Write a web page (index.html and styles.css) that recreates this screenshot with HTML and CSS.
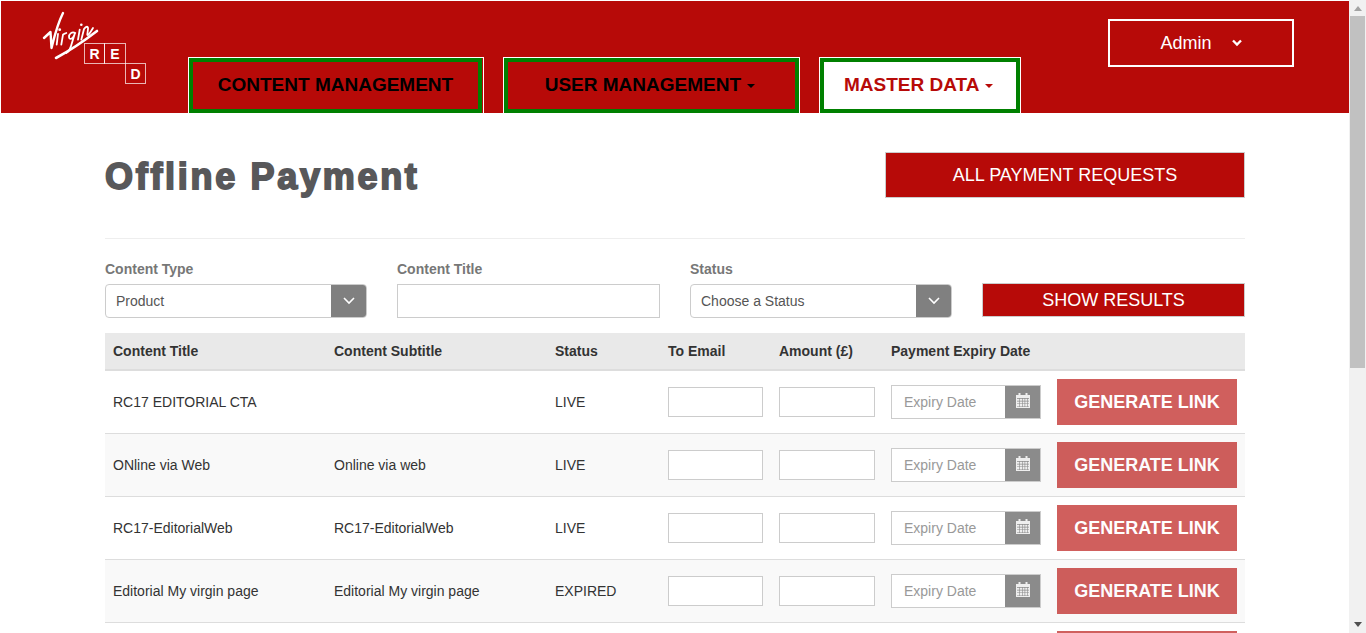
FILE: index.html
```html
<!DOCTYPE html>
<html lang="en">
<head>
    <meta charset="UTF-8">
    <meta name="viewport" content="width=device-width, initial-scale=1.0">
    <title>Offline Payment</title>
    <link rel="stylesheet" href="styles.css">
</head>
<body>

<div class="window">
<div class="page">
    <header class="topbar">
        <svg class="logo" width="110" height="84" viewBox="0 0 110 84">
            <g fill="none" stroke="#fff" stroke-linecap="round" stroke-linejoin="round">
                <path stroke-width="2.4" d="M3 33 L9.5 27 L10.5 43 C13 33 16 20 22 8"/>
                <path stroke-width="1.8" d="M17 29 L15.7 39.7 M20.3 39.7 L22 29.7 C23 28.5 24 28.5 25.3 28 M34.3 28 C31 26 28 29 28 32 C28 35 32 35 34 28 L30 41 C29 45 27 47 25.3 48 M38.7 24.7 L37 34.7 M40.3 34.7 L43 24 C45 21 47.5 21 47 24 L46.3 29.7 C47 31 49 28 52 23"/>
                <path stroke-width="2.6" d="M15 53 C28 46 43 36 56 26"/>
            </g>
            <circle cx="18.7" cy="24.7" r="1.4" fill="#fff"/>
            <circle cx="40.3" cy="19.7" r="1.3" fill="#fff"/>
            <g fill="none" stroke="#fff" stroke-opacity=".7">
                <rect x="43.5" y="38.5" width="20" height="20"/>
                <rect x="63.5" y="38.5" width="21" height="20"/>
                <rect x="84.5" y="58.5" width="20" height="20"/>
            </g>
            <g class="logo-letters">
                <text x="53.5" y="54">R</text>
                <text x="74" y="54">E</text>
                <text x="94.5" y="74">D</text>
            </g>
        </svg>
        <nav class="tabs">
            <a class="tab tab-content"><span class="tab-inner">CONTENT MANAGEMENT</span></a>
            <a class="tab tab-user"><span class="tab-inner">USER MANAGEMENT <i class="caret"></i></span></a>
            <a class="tab tab-master"><span class="tab-inner">MASTER DATA <i class="caret"></i></span></a>
        </nav>
        <div class="admin">
            <span>Admin</span>
            <svg width="10" height="8" viewBox="0 0 10 8"><path d="M1 1.5 L5 5.5 L9 1.5" fill="none" stroke="#fff" stroke-width="2.4"/></svg>
        </div>
    </header>

    <main class="content">
        <div class="title-row">
            <h1>Offline Payment</h1>
            <button class="btn-red btn-all">ALL PAYMENT REQUESTS</button>
        </div>

        <div class="filters">
            <div class="field field-type">
                <label>Content Type</label>
                <div class="select"><span>Product</span><b class="select-arrow"><svg width="12" height="8" viewBox="0 0 12 8"><path d="M1 1 L6 6 L11 1" fill="none" stroke="#fff" stroke-width="1.6"/></svg></b></div>
            </div>
            <div class="field field-title">
                <label>Content Title</label>
                <input class="text-input" type="text">
            </div>
            <div class="field field-status">
                <label>Status</label>
                <div class="select"><span>Choose a Status</span><b class="select-arrow"><svg width="12" height="8" viewBox="0 0 12 8"><path d="M1 1 L6 6 L11 1" fill="none" stroke="#fff" stroke-width="1.6"/></svg></b></div>
            </div>
            <button class="btn-red btn-show">SHOW RESULTS</button>
        </div>

        <table class="results">
            <thead>
                <tr>
                    <th class="col-title">Content Title</th>
                    <th class="col-sub">Content Subtitle</th>
                    <th class="col-status">Status</th>
                    <th class="col-email">To Email</th>
                    <th class="col-amount">Amount (£)</th>
                    <th class="col-date">Payment Expiry Date</th>
                    <th class="col-action"></th>
                </tr>
            </thead>
            <tbody>
                <tr>
                    <td>RC17 EDITORIAL CTA</td>
                    <td></td>
                    <td>LIVE</td>
                    <td><input class="cell-input" type="text"></td>
                    <td><input class="cell-input cell-amount" type="text"></td>
                    <td><div class="date"><input type="text" placeholder="Expiry Date"><b class="date-icon"><svg width="14" height="15" viewBox="0 0 14 15"><use href="#cal"/></svg></b></div></td>
                    <td><button class="btn-link">GENERATE LINK</button></td>
                </tr>
                <tr>
                    <td>ONline via Web</td>
                    <td>Online via web</td>
                    <td>LIVE</td>
                    <td><input class="cell-input" type="text"></td>
                    <td><input class="cell-input cell-amount" type="text"></td>
                    <td><div class="date"><input type="text" placeholder="Expiry Date"><b class="date-icon"><svg width="14" height="15" viewBox="0 0 14 15"><use href="#cal"/></svg></b></div></td>
                    <td><button class="btn-link">GENERATE LINK</button></td>
                </tr>
                <tr>
                    <td>RC17-EditorialWeb</td>
                    <td>RC17-EditorialWeb</td>
                    <td>LIVE</td>
                    <td><input class="cell-input" type="text"></td>
                    <td><input class="cell-input cell-amount" type="text"></td>
                    <td><div class="date"><input type="text" placeholder="Expiry Date"><b class="date-icon"><svg width="14" height="15" viewBox="0 0 14 15"><use href="#cal"/></svg></b></div></td>
                    <td><button class="btn-link">GENERATE LINK</button></td>
                </tr>
                <tr>
                    <td>Editorial My virgin page</td>
                    <td>Editorial My virgin page</td>
                    <td>EXPIRED</td>
                    <td><input class="cell-input" type="text"></td>
                    <td><input class="cell-input cell-amount" type="text"></td>
                    <td><div class="date"><input type="text" placeholder="Expiry Date"><b class="date-icon"><svg width="14" height="15" viewBox="0 0 14 15"><use href="#cal"/></svg></b></div></td>
                    <td><button class="btn-link">GENERATE LINK</button></td>
                </tr>
            </tbody>
        </table>
        <div class="next-row"></div>
    </main>
</div>

<div class="scrollbar">
    <i class="arrow-up"></i>
    <div class="thumb"></div>
    <i class="arrow-down"></i>
</div>
</div>

<svg class="defs" width="0" height="0">
    <symbol id="cal" viewBox="0 0 14 15">
        <path fill="#eee" d="M0 2h2.5V0h2v2h5V0h2v2H14v13H0z"/>
        <path fill="#8b8b8b" d="M1 5h12v.7H1zM1 7.8h12v.6H1zM1 10.4h12v.6H1zM1 13h12v.6H1zM3.3 5h.6v9h-.6zM6 5h.6v9H6zM8.6 5h.6v9h-.6zM11.2 5h.6v9h-.6z"/>
    </symbol>
</svg>

</body>
</html>
```

FILE: styles.css
```css
html, body {
    margin: 0;
    padding: 0;
    height: 100%;
    overflow: hidden;
}
body {
    font-family: "Liberation Sans", Arial, sans-serif;
    font-size: 14px;
    color: #333;
    background: #fff;
}
.window {
    display: flex;
    height: 633px;
}
.page {
    flex: 1;
    min-width: 0;
    overflow: hidden;
    padding: 1px 0 0 1px;
}
.defs {
    display: block;
}

/* header */
.topbar {
    display: flex;
    height: 112px;
    background: #b70a08;
}
.logo {
    flex: none;
    margin: 4px 0 0 40px;
}
.logo-letters text {
    font-family: "Liberation Sans", Arial, sans-serif;
    font-size: 14px;
    font-weight: bold;
    fill: #fff;
    text-anchor: middle;
}
.tabs {
    display: flex;
    align-self: flex-end;
    gap: 19px;
    margin-left: 37px;
}
.tab {
    display: block;
    height: 56px;
    box-sizing: border-box;
    border: 1px solid #fff;
    border-bottom: 0;
    color: #000;
    font-size: 19px;
    font-weight: bold;
}
.tab-inner {
    display: flex;
    align-items: center;
    justify-content: center;
    gap: 1px;
    box-sizing: border-box;
    height: 55px;
    padding-bottom: 2px;
    border: 4px solid #008000;
    white-space: pre;
}
.tab-content { width: 296px; }
.tab-user { width: 297px; }
.tab-master { width: 202px; }
.tab-content .tab-inner { margin-right: 1px; }
.tab-user .tab-inner,
.tab-master .tab-inner { padding-right: 3px; }
.tab-master { color: #b70a08; }
.tab-master .tab-inner { background: #fff; }
.caret {
    width: 0;
    height: 0;
    margin-top: 3px;
    border-top: 4px solid currentColor;
    border-left: 4px solid transparent;
    border-right: 4px solid transparent;
}
.admin {
    display: flex;
    align-items: center;
    justify-content: center;
    gap: 20px;
    box-sizing: border-box;
    width: 186px;
    height: 48px;
    margin: 18px 0 0 87px;
    border: 2px solid #fff;
    color: #fff;
    font-size: 18px;
}

/* main area */
.content {
    width: 1140px;
    margin-left: 104px;
}
.title-row {
    display: flex;
    justify-content: space-between;
    height: 125px;
    border-bottom: 1px solid #eee;
    box-sizing: content-box;
}
h1 {
    margin: 41px 0 0;
    color: #58585a;
    font-size: 36px;
    font-weight: bold;
    letter-spacing: 2.7px;
    -webkit-text-stroke: 1.8px #58585a;
    line-height: 46px;
}
.btn-red {
    background: #b70a08;
    border: 1px solid #ccc;
    color: #fff;
    font-family: inherit;
    font-size: 18px;
    padding: 0;
}
.btn-all {
    width: 360px;
    height: 46px;
    margin-top: 39px;
}
.filters {
    display: flex;
    align-items: flex-end;
    margin-top: 22px;
    height: 57px;
}
.field {
    display: flex;
    flex-direction: column;
}
.field label {
    color: #777;
    font-weight: bold;
    line-height: 16px;
    margin-bottom: 7px;
}
.field-type { width: 262px; }
.field-title { width: 263px; margin-left: 30px; }
.field-status { width: 262px; margin-left: 30px; }
.select {
    display: flex;
    justify-content: space-between;
    height: 34px;
    box-sizing: border-box;
    border: 1px solid #ccc;
    border-radius: 4px;
    overflow: hidden;
    color: #555;
}
.select span {
    padding-left: 10px;
    line-height: 32px;
}
.select-arrow {
    display: flex;
    align-items: center;
    justify-content: center;
    width: 35px;
    background: #808080;
}
.text-input {
    height: 34px;
    box-sizing: border-box;
    border: 1px solid #ccc;
    padding: 0 10px;
    outline: 0;
}
.btn-show {
    width: 263px;
    height: 34px;
    margin: 0 0 1px 30px;
}

/* table */
.results {
    width: 1140px;
    table-layout: fixed;
    border-collapse: collapse;
    margin-top: 15px;
}
.results th {
    box-sizing: border-box;
    height: 37px;
    padding: 0 8px 1px;
    background: #e9e9e9;
    border-bottom: 2px solid #ddd;
    text-align: left;
}
.results td {
    height: 46px;
    padding: 8px;
    border-bottom: 1px solid #ddd;
}
.results tbody tr:nth-child(even) td {
    background: #f9f9f9;
}
.col-title { width: 221px; }
.col-sub { width: 221px; }
.col-status { width: 113px; }
.col-email { width: 111px; }
.col-amount { width: 112px; }
.col-date { width: 166px; }
.col-action { width: 196px; }
.cell-input {
    display: block;
    box-sizing: border-box;
    width: 95px;
    height: 30px;
    border: 1px solid #ccc;
    padding: 0 6px;
    outline: 0;
}
.cell-amount {
    width: 96px;
}
.date {
    display: flex;
    width: 150px;
    height: 34px;
    box-sizing: border-box;
    border: 1px solid #ccc;
}
.date input {
    flex: 1;
    min-width: 0;
    border: 0;
    padding: 0 12px;
    outline: 0;
    font-family: inherit;
    font-size: 14px;
}
.date input::placeholder {
    color: #999;
}
.date-icon {
    display: flex;
    align-items: center;
    justify-content: center;
    box-sizing: border-box;
    width: 35px;
    padding: 0 0 3px 1px;
    background: #8b8b8b;
}
.btn-link {
    display: block;
    width: 180px;
    height: 46px;
    padding: 0;
    border: 0;
    background: #b70a08;
    color: #fff;
    font-family: inherit;
    font-size: 18px;
    font-weight: bold;
    opacity: .65;
}
/* top of the next row's button, the rest is below the fold */
.next-row {
    width: 180px;
    height: 46px;
    margin: 8px 0 0 952px;
    background: #b70a08;
    opacity: .65;
}

/* scrollbar */
.scrollbar {
    flex: none;
    display: flex;
    flex-direction: column;
    align-items: center;
    width: 17px;
    background: #f1f1f1;
}
.thumb {
    width: 15px;
    height: 352px;
    margin-top: 5px;
    background: #c1c1c1;
}
.arrow-up {
    margin-top: 6px;
    border-bottom: 5px solid #a3a3a3;
    border-left: 4px solid transparent;
    border-right: 4px solid transparent;
}
.arrow-down {
    margin-top: auto;
    margin-bottom: 6px;
    border-top: 5px solid #505050;
    border-left: 4px solid transparent;
    border-right: 4px solid transparent;
}
```
